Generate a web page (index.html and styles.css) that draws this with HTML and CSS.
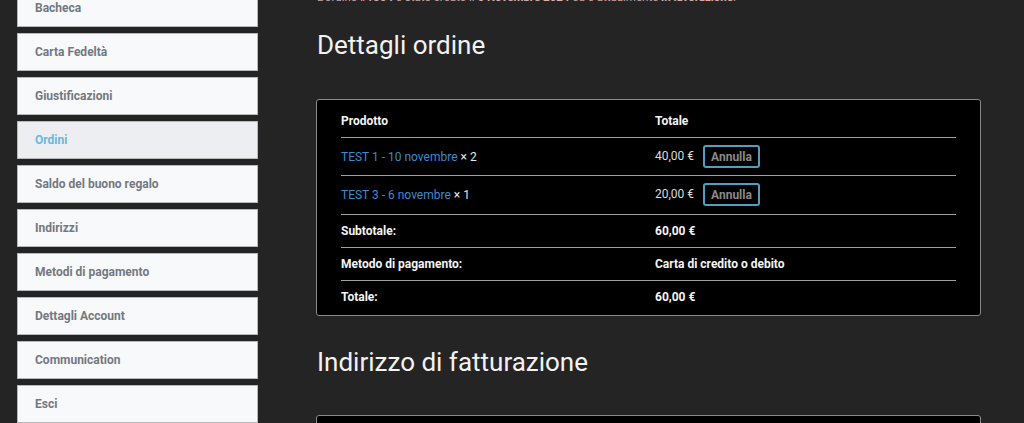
FILE: index.html
```html
<!DOCTYPE html>
<html lang="it">
<head>
<meta charset="utf-8">
<title>Ordine</title>
<link rel="stylesheet" href="styles.css">
</head>
<body>
<div class="page">
  <nav class="account-nav">
    <a class="nav-item" href="#">Bacheca</a>
    <a class="nav-item" href="#">Carta Fedeltà</a>
    <a class="nav-item" href="#">Giustificazioni</a>
    <a class="nav-item is-active" href="#">Ordini</a>
    <a class="nav-item" href="#">Saldo del buono regalo</a>
    <a class="nav-item" href="#">Indirizzi</a>
    <a class="nav-item" href="#">Metodi di pagamento</a>
    <a class="nav-item" href="#">Dettagli Account</a>
    <a class="nav-item" href="#">Communication</a>
    <a class="nav-item" href="#">Esci</a>
  </nav>
  <main class="content">
    <p class="notice">L'ordine <mark>#1364</mark> è stato creato il <mark>6 Novembre 2024</mark> ed è attualmente <mark>in lavorazione</mark>.</p>
    <h2 class="section-title">Dettagli ordine</h2>
    <div class="panel">
      <table class="order-table">
        <thead>
          <tr><th class="col-product">Prodotto</th><th>Totale</th></tr>
        </thead>
        <tbody>
          <tr class="item-row">
            <td><a class="product-link" href="#">TEST 1 - 10 novembre</a> <span class="qty">× 2</span></td>
            <td><span class="amount">40,00 €</span><button class="cancel-btn">Annulla</button></td>
          </tr>
          <tr class="item-row">
            <td><a class="product-link" href="#">TEST 3 - 6 novembre</a> <span class="qty">× 1</span></td>
            <td><span class="amount">20,00 €</span><button class="cancel-btn">Annulla</button></td>
          </tr>
        </tbody>
        <tfoot>
          <tr><th>Subtotale:</th><td>60,00 €</td></tr>
          <tr><th>Metodo di pagamento:</th><td>Carta di credito o debito</td></tr>
          <tr><th>Totale:</th><td>60,00 €</td></tr>
        </tfoot>
      </table>
    </div>
    <h2 class="section-title second">Indirizzo di fatturazione</h2>
    <div class="panel address"></div>
  </main>
</div>
</body>
</html>
```
FILE: styles.css
```css
* { box-sizing: border-box; }
html, body { margin: 0; }
body {
  background: #242424;
  font-family: Roboto, "Noto Sans", "Liberation Sans", sans-serif;
  color: #ececec;
  overflow: hidden;
  height: 423px;
}
.page {
  display: flex;
  gap: 58px;
  padding-left: 17px;
  margin-top: -11px;
}
.account-nav {
  width: 241px;
  flex: none;
  display: flex;
  flex-direction: column;
  gap: 6px;
}
.nav-item {
  display: flex;
  align-items: center;
  height: 38px;
  padding: 0 17px;
  background: #f8f9fa;
  border: 1px solid #b8b8b8;
  color: #737882;
  font-size: 12px;
  font-weight: 700;
  text-decoration: none;
}
.nav-item.is-active {
  background: #eceef1;
  color: #6cb6dc;
}
.content {
  width: 665px;
  flex: none;
}
.notice {
  margin: 0;
  height: 18px;
  line-height: 16px;
  font-size: 11.5px;
  color: #c9a3a6;
  padding-left: 1px;
}
.notice mark {
  background: none;
  color: #d8aeb0;
  font-weight: 700;
}
.section-title {
  margin: 23px 0 39px;
  padding-left: 1px;
  font-size: 26px;
  line-height: 30px;
  font-weight: 400;
  color: #f2f2f2;
}
.section-title.second {
  margin-top: 31px;
  margin-bottom: 38px;
}
.panel {
  background: #000;
  border: 1px solid #8a8a8a;
  border-radius: 3px;
  padding: 6px 24px 2px;
}
.panel.address {
  height: 60px;
}
.order-table {
  width: 100%;
  border-collapse: collapse;
  font-size: 12px;
  line-height: 16px;
}
.order-table th,
.order-table td {
  text-align: left;
  vertical-align: middle;
  padding: 8px 0;
}
.order-table th {
  font-weight: 700;
  color: #f4f4f4;
}
.col-product {
  width: 314px;
}
.order-table thead th {
  padding: 7px 0 8px;
  border-bottom: 1px solid #a0a0a0;
}
.item-row td {
  padding: 7px 0 7px;
  border-bottom: 1px solid #a0a0a0;
}
.item-row + .item-row td {
  padding-bottom: 8px;
}
.order-table tfoot tr + tr th,
.order-table tfoot tr + tr td {
  border-top: 1px solid #a0a0a0;
}
.order-table tfoot td {
  font-weight: 700;
  color: #f4f4f4;
}
.product-link {
  color: #3c8bd2;
  text-decoration: none;
}
.qty {
  color: #e6e6e6;
}
.amount {
  color: #dcdcdc;
}
.cancel-btn {
  margin-left: 9px;
  height: 23px;
  padding: 0 6px;
  background: transparent;
  border: 2px solid #4f9fc2;
  border-radius: 3px;
  color: #8a8a8a;
  font-family: inherit;
  font-size: 12px;
  font-weight: 700;
  vertical-align: middle;
}
```
